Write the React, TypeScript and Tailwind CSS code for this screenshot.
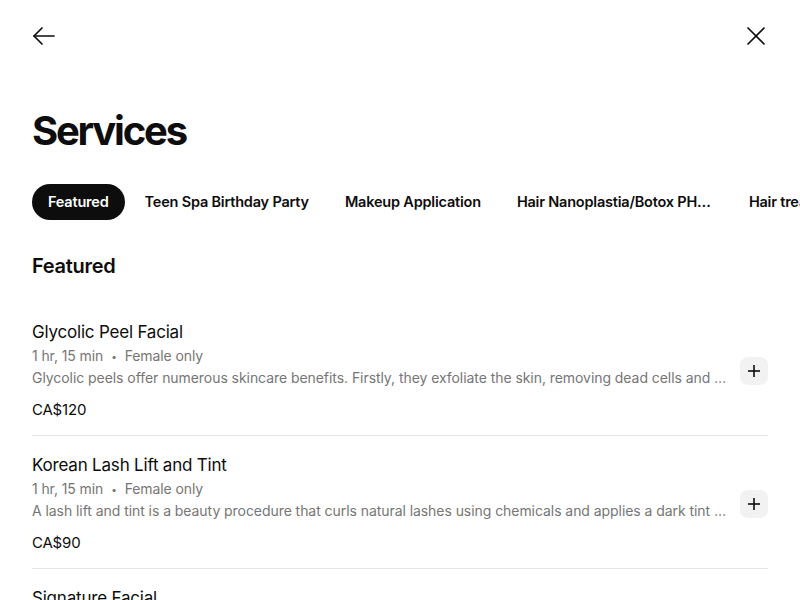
import React from 'react';

const tabs = [
  'Featured',
  'Teen Spa Birthday Party',
  'Makeup Application',
  'Hair Nanoplastia/Botox PH Reconstruction Treatment',
  'Hair treatments',
];

const services = [
  {
    name: 'Glycolic Peel Facial',
    duration: '1 hr, 15 min',
    note: 'Female only',
    desc: 'Glycolic peels offer numerous skincare benefits. Firstly, they exfoliate the skin, removing dead cells and revealing a brighter, smoother complexion underneath.',
    price: 'CA$120',
  },
  {
    name: 'Korean Lash Lift and Tint',
    duration: '1 hr, 15 min',
    note: 'Female only',
    desc: 'A lash lift and tint is a beauty procedure that curls natural lashes using chemicals and applies a dark tint to make them look fuller and longer.',
    price: 'CA$90',
  },
  {
    name: 'Signature Facial',
    duration: '1 hr',
    note: 'Female only',
    desc: 'Our signature facial is a deep cleansing treatment tailored to your skin type.',
    price: 'CA$100',
  },
];

export default function App() {
  return (
    <div className="w-[800px] h-[600px] overflow-hidden bg-white text-[#0d0d0d] font-['Inter',sans-serif]">
      {/* Top bar */}
      <div className="h-[72px] px-[32px] flex items-center justify-between">
        <button className="w-6 h-6 flex items-center justify-center" aria-label="Back">
          <svg width="24" height="24" viewBox="0 0 24 24" fill="none" stroke="#0d0d0d" strokeWidth="1.7" strokeLinecap="round" strokeLinejoin="round">
            <path d="M22 12H2" />
            <path d="M10 4L2 12L10 20" />
          </svg>
        </button>
        <button className="w-6 h-6 flex items-center justify-center" aria-label="Close">
          <svg width="24" height="24" viewBox="0 0 24 24" fill="none" stroke="#0d0d0d" strokeWidth="1.7" strokeLinecap="round">
            <path d="M4 4L20 20" />
            <path d="M20 4L4 20" />
          </svg>
        </button>
      </div>

      {/* Heading */}
      <h1 className="mt-[35px] px-[32px] text-[40px] leading-[48px] font-bold tracking-[-2.2px]">Services</h1>

      {/* Tabs */}
      <div className="mt-[29px] pl-[32px] flex gap-1 whitespace-nowrap overflow-hidden">
        {tabs.map((t, i) => (
          <div
            key={t}
            className={
              i === 0
                ? 'h-9 px-4 rounded-full bg-[#0d0d0d] text-white text-[14.5px] font-semibold tracking-[-0.2px] flex items-center shrink-0'
                : 'h-9 px-4 rounded-full text-[#0d0d0d] text-[14.5px] font-semibold tracking-[-0.2px] flex items-center shrink-0'
            }
          >
            <span className="max-w-[196px] truncate">{t}</span>
          </div>
        ))}
      </div>

      {/* Section */}
      <div className="px-[32px] mt-[32px]">
        <h2 className="text-[20px] leading-7 font-semibold tracking-[-0.3px]">Featured</h2>
        <ul className="mt-[23px]">
          {services.map((s) => (
            <li key={s.name} className="pt-[17px] pb-[13px] border-b border-[#e5e5e5] flex items-center gap-3">
              <div className="flex-1 min-w-0">
                <p className="text-[17px] leading-6 tracking-[-0.2px]">{s.name}</p>
                <p className="text-sm leading-6 text-[#767676] flex items-center gap-2 tracking-[-0.1px]">
                  <span>{s.duration}</span>
                  <span className="text-[10px]">•</span>
                  <span>{s.note}</span>
                </p>
                <p className="text-sm leading-5 text-[#767676] truncate tracking-[-0.06px]">{s.desc}</p>
                <p className="mt-[10px] text-[15px] leading-6 tracking-[-0.2px]">{s.price}</p>
              </div>
              <button className="w-7 h-7 rounded-lg bg-[#f2f2f2] flex items-center justify-center shrink-0" aria-label="Add">
                <svg width="14" height="14" viewBox="0 0 14 14" fill="none" stroke="#0d0d0d" strokeWidth="1.6">
                  <path d="M7 1V13" />
                  <path d="M1 7H13" />
                </svg>
              </button>
            </li>
          ))}
        </ul>
      </div>
    </div>
  );
}
